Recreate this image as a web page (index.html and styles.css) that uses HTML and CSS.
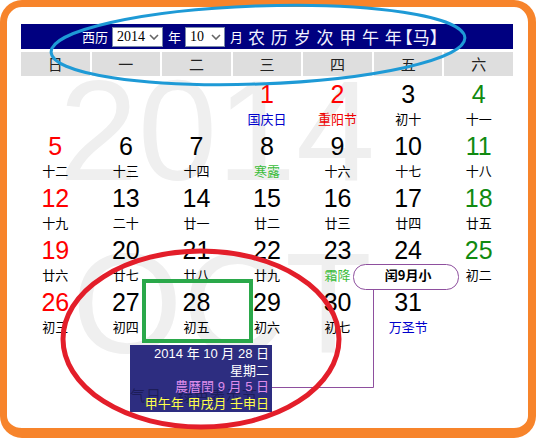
FILE: index.html
```html
<!DOCTYPE html>
<html lang="zh-CN">
<head>
<meta charset="utf-8">
<title>万年历</title>
<link rel="stylesheet" href="styles.css">
</head>
<body>
<div class="frame">
  <div class="cal">
    <div class="wm wm-year">2014</div>
    <div class="wm wm-month">OCT</div>
    <div class="head">
      <span class="lbl">西历</span>
      <span class="sel sel-year">2014<svg class="chev" viewBox="0 0 10 6" width="10" height="6"><path d="M1 1 L5 5 L9 1" fill="none" stroke="#666" stroke-width="1.6"/></svg></span>
      <span class="lbl">年</span>
      <span class="sel sel-month">10<svg class="chev" viewBox="0 0 10 6" width="10" height="6"><path d="M1 1 L5 5 L9 1" fill="none" stroke="#666" stroke-width="1.6"/></svg></span>
      <span class="lbl">月</span>
      <span class="title">农历岁次甲午年</span><span class="zodiac">【马】</span>
    </div>
    <div class="weekdays">
      <div>日</div><div>一</div><div>二</div><div>三</div><div>四</div><div>五</div><div>六</div>
    </div>
    <div class="days">
      <div class="day"></div>
      <div class="day"></div>
      <div class="day"></div>
      <div class="day"><span class="num red">1</span><span class="lunar blue">国庆日</span></div>
      <div class="day"><span class="num red">2</span><span class="lunar red">重阳节</span></div>
      <div class="day"><span class="num">3</span><span class="lunar">初十</span></div>
      <div class="day"><span class="num green">4</span><span class="lunar">十一</span></div>

      <div class="day"><span class="num red">5</span><span class="lunar">十二</span></div>
      <div class="day"><span class="num">6</span><span class="lunar">十三</span></div>
      <div class="day"><span class="num">7</span><span class="lunar">十四</span></div>
      <div class="day"><span class="num">8</span><span class="lunar term">寒露</span></div>
      <div class="day"><span class="num">9</span><span class="lunar">十六</span></div>
      <div class="day"><span class="num">10</span><span class="lunar">十七</span></div>
      <div class="day"><span class="num green">11</span><span class="lunar">十八</span></div>

      <div class="day"><span class="num red">12</span><span class="lunar">十九</span></div>
      <div class="day"><span class="num">13</span><span class="lunar">二十</span></div>
      <div class="day"><span class="num">14</span><span class="lunar">廿一</span></div>
      <div class="day"><span class="num">15</span><span class="lunar">廿二</span></div>
      <div class="day"><span class="num">16</span><span class="lunar">廿三</span></div>
      <div class="day"><span class="num">17</span><span class="lunar">廿四</span></div>
      <div class="day"><span class="num green">18</span><span class="lunar">廿五</span></div>

      <div class="day"><span class="num red">19</span><span class="lunar">廿六</span></div>
      <div class="day"><span class="num">20</span><span class="lunar">廿七</span></div>
      <div class="day"><span class="num">21</span><span class="lunar">廿八</span></div>
      <div class="day"><span class="num">22</span><span class="lunar">廿九</span></div>
      <div class="day"><span class="num">23</span><span class="lunar term">霜降</span></div>
      <div class="day"><span class="num">24</span><span class="lunar leap">闰9月小</span></div>
      <div class="day"><span class="num green">25</span><span class="lunar">初二</span></div>

      <div class="day"><span class="num red">26</span><span class="lunar">初三</span></div>
      <div class="day"><span class="num">27</span><span class="lunar">初四</span></div>
      <div class="day"><span class="num">28</span><span class="lunar">初五</span></div>
      <div class="day"><span class="num">29</span><span class="lunar">初六</span></div>
      <div class="day"><span class="num">30</span><span class="lunar">初七</span></div>
      <div class="day"><span class="num">31</span><span class="lunar blue">万圣节</span></div>
      <div class="day"></div>
    </div>
  </div>

  <svg class="marks" viewBox="0 0 536 438" width="536" height="438">
    <rect x="353.5" y="264.5" width="105" height="25" rx="12" ry="12" fill="none" stroke="#8e4f9e" stroke-width="1"/>
    <path d="M373.5 290 L373.5 387.5 L272 387.5" fill="none" stroke="#8e4f9e" stroke-width="1"/>
    <ellipse cx="258" cy="45" rx="207" ry="39" fill="none" stroke="#1e9ad6" stroke-width="3" transform="rotate(-2 258 45)"/>
    <rect x="144" y="281" width="107" height="60" fill="none" stroke="#2aa84a" stroke-width="4"/>
  </svg>

  <div class="tip">
    <div class="tip-ghost">气日，绿色表示节</div>
    <div class="tip-line">2014 年 10 月 28 日</div>
    <div class="tip-line">星期二</div>
    <div class="tip-line tip-lunar">農曆閏 9 月 5 日</div>
    <div class="tip-line tip-gz">甲午年 甲戌月 壬申日</div>
  </div>

  <svg class="marks marks-top" viewBox="0 0 536 438" width="536" height="438">
    <ellipse cx="201" cy="339" rx="138" ry="88" fill="none" stroke="#e31e2a" stroke-width="5"/>
  </svg>
</div>
</body>
</html>
```

FILE: styles.css
```css
* { box-sizing: border-box; }
html, body { margin: 0; padding: 0; background: #fff; }
body {
  width: 536px;
  height: 438px;
  overflow: hidden;
  font-family: "Liberation Sans", "Noto Sans CJK SC", sans-serif;
}
.frame {
  position: relative;
  width: 536px;
  height: 438px;
  border-style: solid;
  border-color: #f7842b;
  border-width: 7px 8px 10px 7px;
  border-radius: 22px;
  padding: 17px 0 0 14px;
  background: #fff;
}
.cal {
  position: relative;
  width: 492px;
}
.wm {
  position: absolute;
  font-family: "Liberation Sans", sans-serif;
  color: #efefef;
  font-size: 142px;
  line-height: 1;
  z-index: 0;
  white-space: nowrap;
}
.wm-year { left: 38px; top: 36px; }
.wm-month { left: 51px; top: 209px; }
.head {
  position: relative;
  z-index: 1;
  height: 25px;
  background: #000080;
  color: #fff;
  display: flex;
  align-items: center;
  font-family: "Noto Sans CJK SC", sans-serif;
  font-size: 13px;
  padding-left: 61px;
}
.lbl { line-height: 16px; }
.sel {
  display: inline-flex;
  align-items: center;
  justify-content: space-between;
  height: 20px;
  background: #fff;
  border: 1px solid #7a8aa8;
  color: #000;
  font-family: "Liberation Serif", serif;
  font-size: 14px;
  padding: 0 3px 0 4px;
  margin: 0 5px 0 4px;
}
.sel-year { width: 51px; }
.sel-month { width: 40px; }
.chev { display: block; }
.title {
  font-size: 17px;
  letter-spacing: 5.8px;
  color: #f2f2ff;
  margin-left: 5px;
  line-height: 20px;
}
.zodiac {
  font-size: 17px;
  color: #f2f2ff;
  line-height: 20px;
  margin-left: -12px;
}
.weekdays {
  position: relative;
  z-index: 1;
  margin-top: 3px;
  display: grid;
  grid-template-columns: repeat(7, 1fr);
  column-gap: 2px;
}
.weekdays div {
  height: 24px;
  background: #dedede;
  text-align: center;
  font-family: "Noto Sans CJK SC", sans-serif;
  font-size: 15px;
  line-height: 24px;
  color: #222;
}
.days {
  position: relative;
  z-index: 1;
  display: grid;
  grid-template-columns: repeat(7, 1fr);
  column-gap: 2px;
}
.day {
  height: 52px;
  display: flex;
  flex-direction: column;
  align-items: center;
  padding-top: 4px;
}
.num {
  font-family: "Liberation Sans", sans-serif;
  font-size: 25px;
  line-height: 28px;
  color: #000;
}
.lunar {
  font-family: "Noto Sans CJK SC", sans-serif;
  font-size: 13px;
  line-height: 16px;
  margin-top: 3px;
  color: #000;
}
.num.red { color: #f00; }
.num.green { color: #108a10; }
.lunar.blue { color: #0000cc; }
.lunar.red { color: #e00; }
.lunar.term { color: #3bbd3b; }
.lunar.leap { font-weight: bold; }
.marks {
  position: absolute;
  left: -7px;
  top: -7px;
  pointer-events: none;
  z-index: 2;
}
.marks-top { z-index: 4; }
.tip {
  position: absolute;
  left: 123px;
  top: 338px;
  width: 142px;
  height: 67px;
  background: #2d2d80;
  z-index: 3;
  padding: 1px 3px 0 0;
  text-align: right;
  font-family: "Liberation Sans", "Noto Sans CJK SC", sans-serif;
  font-size: 13px;
  color: #fff;
}
.tip-ghost {
  position: absolute;
  left: 0;
  top: 42px;
  white-space: nowrap;
  font-family: "Noto Sans CJK SC", sans-serif;
  font-size: 15px;
  line-height: 16px;
  letter-spacing: 1px;
  color: rgba(10, 10, 40, 0.45);
}
.tip-line { position: relative; line-height: 16.5px; white-space: nowrap; }
.tip-lunar { color: #dd8cea; }
.tip-gz { color: #ffff4a; }
```
